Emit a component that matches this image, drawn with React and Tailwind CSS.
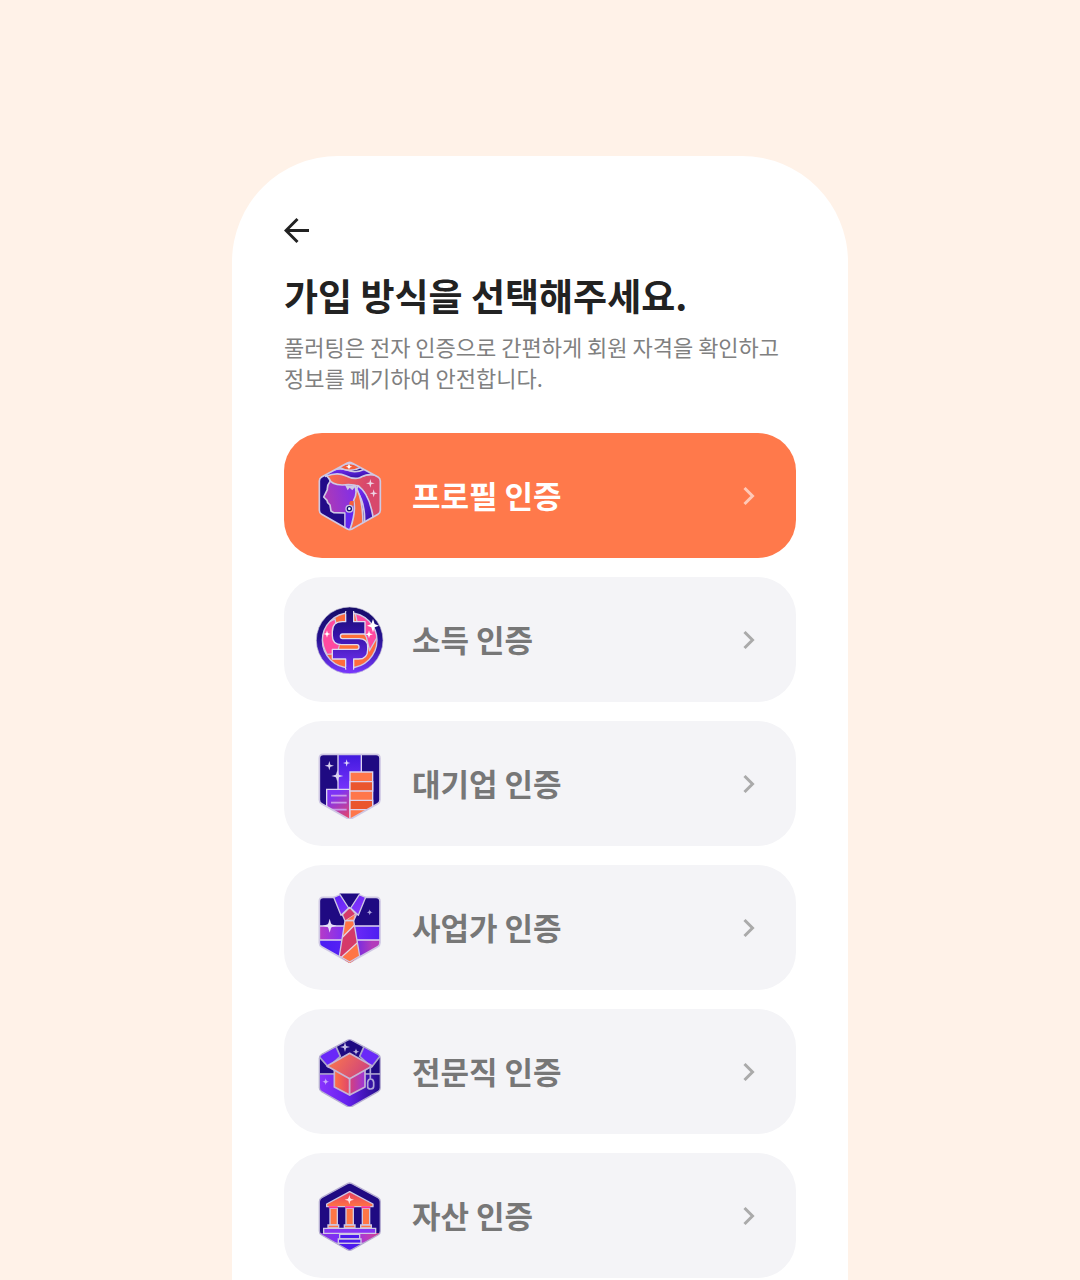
import React from "react";

const LINE = "#cfc8e4";
const SHIELD = "M43 56Q43 44 55 44H213Q225 44 225 56V180Q225 188 218 192L141 236Q134 240 127 236L50 192Q43 188 43 180Z";
const HEX = "M127 38Q134 34 141 38L219 80Q226 84 226 92V180Q226 188 219 192L141 236Q134 240 127 236L50 192Q43 188 43 180V92Q43 84 50 80Z";

function Star({ x, y, r, fill = "#fff" }) {
  const k = r * 0.22;
  return (
    <path
      fill={fill}
      d={`M${x} ${y - r}L${x + k} ${y - k}L${x + r} ${y}L${x + k} ${y + k}L${x} ${y + r}L${x - k} ${y + k}L${x - r} ${y}L${x - k} ${y - k}Z`}
    />
  );
}

function Badge({ top, children }) {
  return (
    <svg className="size-[70px] shrink-0" viewBox={`30 ${top} 210 210`} aria-hidden="true">
      {children}
    </svg>
  );
}

function ProfileIcon() {
  return (
    <Badge top={32}>
      <defs>
        <clipPath id="pClip"><path d={HEX} /></clipPath>
        <linearGradient id="pFace" x1="0" y1="0.6" x2="1" y2="0.3">
          <stop offset="0" stopColor="#b23bb0" /><stop offset="1" stopColor="#7a2df0" />
        </linearGradient>
        <linearGradient id="pHair" x1="0" y1="0" x2="1" y2="0.3">
          <stop offset="0" stopColor="#ff6f45" /><stop offset="0.7" stopColor="#d8486c" />
        </linearGradient>
        <linearGradient id="pBlue" x1="0" y1="0" x2="0.6" y2="1">
          <stop offset="0" stopColor="#7a30ff" /><stop offset="1" stopColor="#3510a8" />
        </linearGradient>
      </defs>
      <g clipPath="url(#pClip)" stroke={LINE} strokeWidth="5" strokeLinejoin="round">
        <path d="M40 30H230V240H40Z" fill="#220a88" />
        <path d="M70 80L164 96L156 150L146 240H120V188L86 187L78 182L75 164L68 157L66 150L56 140L67 118Q66 104 76 92Z" fill="url(#pFace)" />
        <path d="M122 180L146 168L150 240H122Z" fill="#6426f0" stroke="none" />
        <path d="M62 74Q92 62 122 74Q148 86 176 76Q200 66 232 82V240H200Q206 150 162 108Q140 100 112 104Q78 104 72 84Z" fill="url(#pHair)" />
        <path d="M158 106Q196 130 206 214L178 232Q184 160 154 120Z" fill="url(#pBlue)" />
        <path d="M150 108Q176 142 174 240H134Q154 186 146 150Q158 130 150 108Z" fill="#f76a45" />
        <path d="M66 68Q98 48 128 60Q152 70 180 56L206 72Q182 72 164 82Q146 88 122 76Q96 64 62 78Z" fill="url(#pBlue)" />
        <path d="M100 50Q134 28 170 50Q134 70 100 50Z" fill="#f45e3c" />
      </g>
      <path d="M120 104L128 120L134 112L142 120L152 108Z" fill={LINE} />
      <path d="M138 152Q132 152 133 166H146V152Z" fill="#f45e3c" />
      <circle cx="133" cy="175" r="10" fill="#14106e" stroke={LINE} strokeWidth="4" />
      <circle cx="133" cy="175" r="4" fill="#fff" />
      <Star x={132} y={49} r={10} />
      <circle cx="132" cy="49" r="4" fill="#fff" />
      <Star x={196} y={99} r={13} fill="#eed5e5" />
      <Star x={206} y={129} r={12} fill="#eed5e5" />
      <path d={HEX} fill="none" stroke={LINE} strokeWidth="5" />
    </Badge>
  );
}

function IncomeIcon() {
  return (
    <Badge top={30}>
      <defs>
        <linearGradient id="iRing" x1="0" y1="0" x2="0" y2="1">
          <stop offset="0" stopColor="#160c68" /><stop offset="0.45" stopColor="#23108d" /><stop offset="1" stopColor="#7838ff" />
        </linearGradient>
        <linearGradient id="iSign" gradientUnits="userSpaceOnUse" x1="134" y1="36" x2="134" y2="236">
          <stop offset="0" stopColor="#160c68" /><stop offset="0.4" stopColor="#3212a5" /><stop offset="1" stopColor="#7c35ff" />
        </linearGradient>
        <clipPath id="iClip"><circle cx="134" cy="136" r="82" /></clipPath>
      </defs>
      <circle cx="134" cy="136" r="100" fill="url(#iRing)" stroke="#c5c3d6" strokeWidth="2" />
      <circle cx="134" cy="136" r="82" fill="#ff6b3d" />
      <g clipPath="url(#iClip)" stroke={LINE} strokeWidth="4">
        <path d="M62 86L90 72L98 108L104 150L96 176L66 178Q40 130 62 86Z" fill="#ff4aa0" />
        <path d="M150 50L196 72L218 124L194 166L184 126L156 80Z" fill="#ff4aa0" />
      </g>
      <circle cx="134" cy="136" r="82" fill="none" stroke={LINE} strokeWidth="4" />
      <path d="M104 116H172V132H104ZM104 148H166V164H104Z" fill="#ff7038" />
      <path
        d="M122 50V80H112Q82 80 82 110V122Q82 149 110 149H156Q162 149 162 156Q162 163 156 163H82V192H122V222H146V192H160Q188 192 188 164V156Q188 131 162 131H112Q106 131 106 124Q106 117 112 117H180V80H146V50Z"
        fill="url(#iSign)"
        stroke="#e0d9ef"
        strokeWidth="4"
        strokeLinejoin="round"
      />
      <path d="M124 40H144V56H124ZM124 216H144V232H124Z" fill="url(#iSign)" />
      <path d="M204 72L209 87L222 92L209 97L204 112L199 97L186 92L199 87Z" fill="#fff" />
      <Star x={192} y={118} r={12} />
      <circle cx="192" cy="118" r="4" fill="#fff" />
      <Star x={66} y={117} r={11} />
      <circle cx="66" cy="117" r="4" fill="#fff" />
    </Badge>
  );
}

function CompanyIcon() {
  return (
    <Badge top={28}>
      <defs>
        <clipPath id="cClip"><path d={SHIELD} /></clipPath>
        <linearGradient id="cTower" x1="0" y1="0" x2="0" y2="1">
          <stop offset="0" stopColor="#3e18dc" /><stop offset="0.6" stopColor="#7c35ff" />
        </linearGradient>
        <linearGradient id="cLow" x1="0.2" y1="0" x2="0.7" y2="1">
          <stop offset="0.2" stopColor="#7d34f5" /><stop offset="1" stopColor="#e4456c" />
        </linearGradient>
      </defs>
      <g clipPath="url(#cClip)">
        <path d="M40 40H230V240H40Z" fill="#1f0a82" />
        <g stroke="#ddd5ef" strokeWidth="4">
          <path d="M99 40H169V240H99Z" fill="url(#cTower)" />
          <path d="M65 149H135V245H65Z" fill="url(#cLow)" />
          <path d="M135 97H203V245H135Z" fill="#ff774b" />
          <path d="M135 126H203V154H135ZM135 182H203V210H135Z" fill="#ea562e" />
        </g>
        <path d="M78 168H125M78 189H125M78 210H125" stroke="#c99be9" strokeWidth="5" />
      </g>
      <path d={SHIELD} fill="none" stroke={LINE} strokeWidth="5" />
      <Star x={73} y={78} r={14} fill="#d9d2f1" />
      <Star x={125} y={70} r={11} fill="#e4dcfa" />
      <Star x={97} y={109} r={18} fill="#d9d2f1" />
      <circle cx="97" cy="109" r="6" fill="#d9d2f1" />
    </Badge>
  );
}

function BusinessIcon() {
  return (
    <Badge top={31}>
      <defs>
        <clipPath id="bClip"><path d={SHIELD} /></clipPath>
        <linearGradient id="bMid"><stop offset="0" stopColor="#b93cc4" /><stop offset="0.45" stopColor="#762dfa" /><stop offset="1" stopColor="#4a1df0" /></linearGradient>
        <linearGradient id="bLow" x1="0" y1="0" x2="1" y2="0"><stop offset="0.1" stopColor="#4b1df3" /><stop offset="0.5" stopColor="#5b24f5" /><stop offset="0.85" stopColor="#b23cbb" /></linearGradient>
        <linearGradient id="bCollar" x1="0" y1="0" x2="1" y2="1"><stop offset="0" stopColor="#5b20f5" /><stop offset="1" stopColor="#8f3cff" /></linearGradient>
        <clipPath id="bTie"><path d="M120 114H146L164 220L134 242L103 220Z" /></clipPath>
      </defs>
      <g clipPath="url(#bClip)">
        <path d="M40 40H230V132H40Z" fill="#1f0a82" />
        <path d="M40 130H230V172H40Z" fill="url(#bMid)" />
        <path d="M40 172H230V242H40Z" fill="url(#bLow)" />
        <path d="M40 130H230M40 172H230" stroke="#ddd5ef" strokeWidth="4" />
      </g>
      <path d={SHIELD} fill="none" stroke={LINE} strokeWidth="5" />
      <path d="M104 34H164L134 80Z" fill="#1f0a82" stroke="#1f0a82" strokeWidth="3" />
      <g clipPath="url(#bTie)">
        <path d="M100 110H168V240H100Z" fill="#d53a69" />
        <path d="M118 112H150V126L112 164ZM160 176L104 228V242H168Z" fill="#ff7546" />
        <path d="M148 128L108 168M164 174L104 228" stroke="#e5d3e4" strokeWidth="4" />
      </g>
      <path d="M120 114H146L164 220L134 238L103 220Z" fill="none" stroke={LINE} strokeWidth="4" strokeLinejoin="round" />
      <path d="M134 74L154 96L146 114H120L112 96Z" fill="#d53a69" stroke={LINE} strokeWidth="4" strokeLinejoin="round" />
      <path d="M151 94L124 112H146Z" fill="#ff7546" stroke="#e5d3e4" strokeWidth="2" />
      <path d="M105 36L131 76L108 98L86 44ZM163 36L137 76L160 98L182 44Z" fill="url(#bCollar)" stroke={LINE} strokeWidth="4" strokeLinejoin="round" />
      <Star x={74} y={129} r={21} fill="#e8e2f8" />
      <circle cx="74" cy="129" r="7" fill="#e8e2f8" />
      <Star x={194} y={89} r={9} fill="#a9a0dc" />
      <circle cx="194" cy="89" r="4" fill="#a9a0dc" />
    </Badge>
  );
}

function ExpertIcon() {
  return (
    <Badge top={28}>
      <defs>
        <clipPath id="eClip"><path d={HEX} /></clipPath>
        <linearGradient id="eBase"><stop offset="0" stopColor="#8c35ff" /><stop offset="0.45" stopColor="#6722ef" /><stop offset="1" stopColor="#1f0a82" /></linearGradient>
        <linearGradient id="eCap" x1="0" y1="0" x2="1" y2="0.4"><stop offset="0" stopColor="#ff7d47" /><stop offset="1" stopColor="#d0447c" /></linearGradient>
        <linearGradient id="eSide"><stop offset="0" stopColor="#d5417a" /><stop offset="1" stopColor="#9d35d8" /></linearGradient>
        <linearGradient id="eFront"><stop offset="0" stopColor="#ff7244" /><stop offset="1" stopColor="#df456c" /></linearGradient>
      </defs>
      <g clipPath="url(#eClip)" stroke="#aaa2cd" strokeWidth="5">
        <path d="M36 28H234V140H36Z" fill="#1f0a82" />
        <path d="M40 84L90 50L106 86L70 118ZM226 84L180 50L164 86L200 118Z" fill="#6928f8" />
        <path d="M36 139H234V244H36Z" fill="url(#eBase)" />
      </g>
      <path d={HEX} fill="none" stroke="#b6aed2" strokeWidth="4" />
      <path d="M88 124L134 150V202L88 178Z" fill="url(#eFront)" stroke="#c6b4d4" strokeWidth="5" strokeLinejoin="round" />
      <path d="M180 124L134 150V202L180 178Z" fill="url(#eSide)" stroke="#c6b4d4" strokeWidth="5" strokeLinejoin="round" />
      <path d="M134 77L202 115L134 153L66 115Z" fill="url(#eCap)" stroke="#c6b4d4" strokeWidth="5" strokeLinejoin="round" />
      <path d="M202 115H196V154M188 178V164Q189 154 197 154Q205 154 206 164V176Q206 184 197 184Q188 184 188 178Z" fill="none" stroke="#b0a7d8" strokeWidth="5" />
      <Star x={120} y={58} r={15} fill="#c5bde4" />
      <circle cx="120" cy="58" r="5" fill="#c5bde4" />
      <Star x={153} y={72} r={10} fill="#b9b0dc" />
      <circle cx="153" cy="72" r="4" fill="#b9b0dc" />
      <Star x={62} y={162} r={10} fill="#c9a8fa" />
      <circle cx="62" cy="162" r="4" fill="#c9a8fa" />
    </Badge>
  );
}

function AssetIcon() {
  return (
    <Badge top={30}>
      <defs>
        <clipPath id="aClip"><path d={HEX} /></clipPath>
        <linearGradient id="aBase"><stop offset="0" stopColor="#8a32dc" /><stop offset="0.4" stopColor="#7830ff" /><stop offset="0.75" stopColor="#b63bc4" /><stop offset="1" stopColor="#d74382" /></linearGradient>
        <linearGradient id="aRoof" x1="0" y1="0" x2="0" y2="1"><stop offset="0" stopColor="#e63d63" /><stop offset="1" stopColor="#ff7443" /></linearGradient>
      </defs>
      <g clipPath="url(#aClip)">
        <path d="M40 30H230V190H40Z" fill="#1f0a82" />
        <path d="M40 186H230V242H40Z" fill="url(#aBase)" />
        <g fill="#4d1bed" stroke={LINE} strokeWidth="4">
          <path d="M104 190H164V204H104Z" />
          <path d="M100 204H168V217H100Z" />
          <path d="M92 217H176V244H92Z" />
        </g>
      </g>
      <path d={HEX} fill="none" stroke="#b6aed2" strokeWidth="4" />
      <path d="M134 62L204 99V107H65V99Z" fill="url(#aRoof)" stroke={LINE} strokeWidth="4" strokeLinejoin="round" />
      <g fill="#ff7645" stroke={LINE} strokeWidth="4">
        <path d="M75 112H97V162H75ZM123 112H145V162H123ZM172 112H194V162H172Z" />
        <path d="M69 162H101V171H69ZM118 162H150V171H118ZM167 162H199V171H167Z" />
      </g>
      <path d="M71 109H98M120 109H148M169 109H196" stroke="#ff2f92" strokeWidth="6" />
      <path d="M56 172H212V187H56Z" fill="#8734f4" stroke={LINE} strokeWidth="4" />
      <Star x={133} y={86} r={14} fill="#fbe6ea" />
      <circle cx="133" cy="86" r="5" fill="#fbe6ea" />
    </Badge>
  );
}

const methods = [
  { label: "프로필 인증", Icon: ProfileIcon, active: true },
  { label: "소득 인증", Icon: IncomeIcon },
  { label: "대기업 인증", Icon: CompanyIcon },
  { label: "사업가 인증", Icon: BusinessIcon },
  { label: "전문직 인증", Icon: ExpertIcon },
  { label: "자산 인증", Icon: AssetIcon },
];

export default function App() {
  return (
    <div className="flex min-h-screen flex-col items-center bg-[#fff2e8] pt-[156px] font-['Noto_Sans_CJK_KR',sans-serif]">
      <main className="flex w-full max-w-[616px] flex-1 flex-col rounded-t-[106px] bg-white px-[52px] pt-[60px]">
        <button type="button" aria-label="뒤로" className="size-[30px] text-[#222]">
          <svg viewBox="0 0 30 30" className="size-full" fill="none" stroke="currentColor" strokeWidth="3">
            <path d="M25 14.5H2M13.5 3L2 14.5L13.5 26" />
          </svg>
        </button>
        <h1 className="mt-[23px] text-[37px] leading-[52px] font-bold text-[#222]">가입 방식을 선택해주세요.</h1>
        <p className="mt-[10px] text-[22px] leading-[31px] text-[#808080]">
          풀러팅은 전자 인증으로 간편하게 회원 자격을 확인하고
          <br />
          정보를 폐기하여 안전합니다.
        </p>
        <ul className="mt-[40px] flex flex-col gap-[19px]">
          {methods.map(({ label, Icon, active }) => (
            <li key={label}>
              <button
                type="button"
                className={`flex h-[125px] w-full items-center rounded-[38px] pr-[35px] pl-[31px] text-left ${
                  active ? "bg-[#ff794b] text-white" : "bg-[#f4f4f7] text-[#777]"
                }`}
              >
                <Icon />
                <span className="ml-[27px] flex-1 pb-[2px] text-[31px] leading-[44px] font-bold">{label}</span>
                <svg
                  viewBox="0 0 24 24"
                  className={`size-[24px] ${active ? "text-[#ffc9b7]" : "text-[#aaa]"}`}
                  fill="none"
                  stroke="currentColor"
                  strokeWidth="3"
                  aria-hidden="true"
                >
                  <path d="M7.5 4L15.5 12L7.5 20" />
                </svg>
              </button>
            </li>
          ))}
        </ul>
      </main>
    </div>
  );
}
